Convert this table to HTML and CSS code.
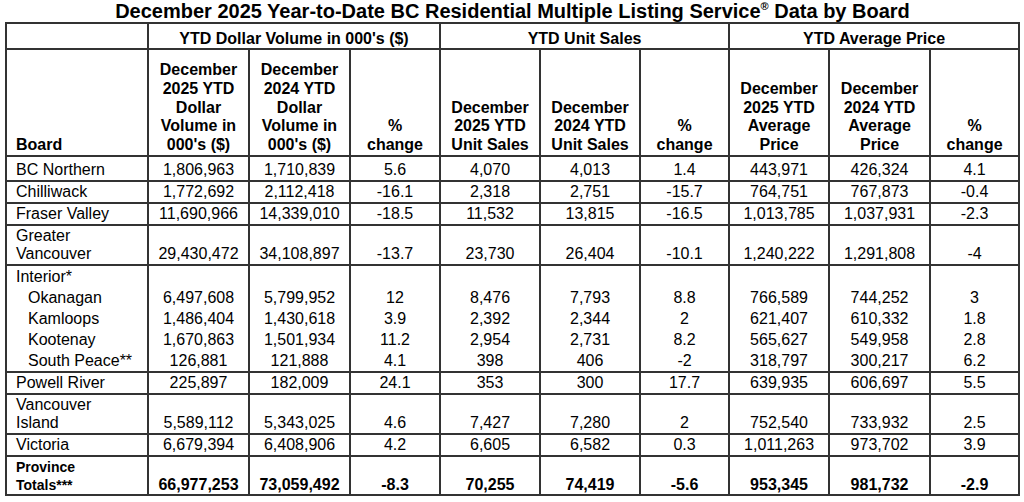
FILE: index.html
```html
<!DOCTYPE html>
<html lang="en">
<head>
<meta charset="utf-8">
<title>December 2025 YTD BC Residential MLS Data by Board</title>
<link rel="stylesheet" href="styles.css">
</head>
<body>
<div class="page">
  <h1 class="title">December 2025 Year-to-Date BC Residential Multiple Listing Service<sup class="reg">®</sup> Data by Board</h1>
  <table class="data">
    <colgroup>
      <col class="c-board">
      <col class="c-101"><col class="c-101"><col class="c-90">
      <col class="c-100"><col class="c-100"><col class="c-89">
      <col class="c-100"><col class="c-101"><col class="c-89">
    </colgroup>
    <thead>
      <tr class="group">
        <th></th>
        <th colspan="3">YTD Dollar Volume in 000's ($)</th>
        <th colspan="3">YTD Unit Sales</th>
        <th colspan="3">YTD Average Price</th>
      </tr>
      <tr class="heads">
        <th class="left">Board</th>
        <th>December<br>2025 YTD<br>Dollar<br>Volume in<br>000's ($)</th>
        <th>December<br>2024 YTD<br>Dollar<br>Volume in<br>000's ($)</th>
        <th>%<br>change</th>
        <th>December<br>2025 YTD<br>Unit Sales</th>
        <th>December<br>2024 YTD<br>Unit Sales</th>
        <th>%<br>change</th>
        <th>December<br>2025 YTD<br>Average<br>Price</th>
        <th>December<br>2024 YTD<br>Average<br>Price</th>
        <th>%<br>change</th>
      </tr>
    </thead>
    <tbody>
      <tr class="first">
        <td class="left">BC Northern</td><td>1,806,963</td><td>1,710,839</td><td>5.6</td><td>4,070</td><td>4,013</td><td>1.4</td><td>443,971</td><td>426,324</td><td>4.1</td>
      </tr>
      <tr>
        <td class="left">Chilliwack</td><td>1,772,692</td><td>2,112,418</td><td>-16.1</td><td>2,318</td><td>2,751</td><td>-15.7</td><td>764,751</td><td>767,873</td><td>-0.4</td>
      </tr>
      <tr>
        <td class="left">Fraser Valley</td><td>11,690,966</td><td>14,339,010</td><td>-18.5</td><td>11,532</td><td>13,815</td><td>-16.5</td><td>1,013,785</td><td>1,037,931</td><td>-2.3</td>
      </tr>
      <tr>
        <td class="left">Greater<br>Vancouver</td><td>29,430,472</td><td>34,108,897</td><td>-13.7</td><td>23,730</td><td>26,404</td><td>-10.1</td><td>1,240,222</td><td>1,291,808</td><td>-4</td>
      </tr>
      <tr class="sub">
        <td class="left">Interior*</td><td></td><td></td><td></td><td></td><td></td><td></td><td></td><td></td><td></td>
      </tr>
      <tr class="sub">
        <td class="left indent">Okanagan</td><td>6,497,608</td><td>5,799,952</td><td>12</td><td>8,476</td><td>7,793</td><td>8.8</td><td>766,589</td><td>744,252</td><td>3</td>
      </tr>
      <tr class="sub">
        <td class="left indent">Kamloops</td><td>1,486,404</td><td>1,430,618</td><td>3.9</td><td>2,392</td><td>2,344</td><td>2</td><td>621,407</td><td>610,332</td><td>1.8</td>
      </tr>
      <tr class="sub">
        <td class="left indent">Kootenay</td><td>1,670,863</td><td>1,501,934</td><td>11.2</td><td>2,954</td><td>2,731</td><td>8.2</td><td>565,627</td><td>549,958</td><td>2.8</td>
      </tr>
      <tr class="sub sub-last">
        <td class="left indent">South Peace**</td><td>126,881</td><td>121,888</td><td>4.1</td><td>398</td><td>406</td><td>-2</td><td>318,797</td><td>300,217</td><td>6.2</td>
      </tr>
      <tr>
        <td class="left">Powell River</td><td>225,897</td><td>182,009</td><td>24.1</td><td>353</td><td>300</td><td>17.7</td><td>639,935</td><td>606,697</td><td>5.5</td>
      </tr>
      <tr>
        <td class="left">Vancouver<br>Island</td><td>5,589,112</td><td>5,343,025</td><td>4.6</td><td>7,427</td><td>7,280</td><td>2</td><td>752,540</td><td>733,932</td><td>2.5</td>
      </tr>
      <tr>
        <td class="left">Victoria</td><td>6,679,394</td><td>6,408,906</td><td>4.2</td><td>6,605</td><td>6,582</td><td>0.3</td><td>1,011,263</td><td>973,702</td><td>3.9</td>
      </tr>
      <tr class="totals">
        <td class="left small">Province<br>Totals***</td><td>66,977,253</td><td>73,059,492</td><td>-8.3</td><td>70,255</td><td>74,419</td><td>-5.6</td><td>953,345</td><td>981,732</td><td>-2.9</td>
      </tr>
    </tbody>
  </table>
</div>
</body>
</html>
```

FILE: styles.css
```css
html, body {
  margin: 0;
  padding: 0;
  background: #fff;
}

body {
  font-family: "Liberation Sans", Arial, sans-serif;
  color: #000;
}

.page {
  width: 1015px;
  margin-left: 5px;
}

.title {
  margin: 0;
  padding-top: 1px;
  font-size: 20px;
  line-height: 21px;
  font-weight: bold;
  text-align: center;
  white-space: nowrap;
}

.reg {
  font-size: 11px;
  vertical-align: 8px;
  line-height: 0;
}

.data {
  table-layout: fixed;
  width: 1015px;
  border-collapse: separate;
  border-spacing: 0;
  border-top: 2px solid #333;
  border-left: 2px solid #333;
  font-size: 16px;
}

.c-board { width: 142px; }
.c-101 { width: 101px; }
.c-100 { width: 100px; }
.c-90 { width: 90px; }
.c-89 { width: 89px; }

.data th,
.data td {
  border-right: 2px solid #333;
  border-bottom: 2px solid #333;
  padding: 1px 2px;
  text-align: center;
  vertical-align: bottom;
  line-height: 18px;
  white-space: nowrap;
}

.data th {
  font-weight: bold;
}

.group th {
  padding-top: 6px;
  padding-bottom: 0;
}

.heads th {
  line-height: 18.8px;
  padding-top: 11px;
  padding-bottom: 0;
}

.data .left {
  text-align: left;
  padding-left: 9px;
}

.data .indent {
  padding-left: 21px;
}

.first td {
  padding-top: 4px;
}

.sub td {
  border-bottom: none;
  line-height: 21px;
  padding-top: 0;
  padding-bottom: 0;
}

.sub-last td {
  border-bottom: 2px solid #333;
}

.totals td {
  font-weight: bold;
  padding-bottom: 0;
}

.totals .small {
  font-size: 14px;
}
```
